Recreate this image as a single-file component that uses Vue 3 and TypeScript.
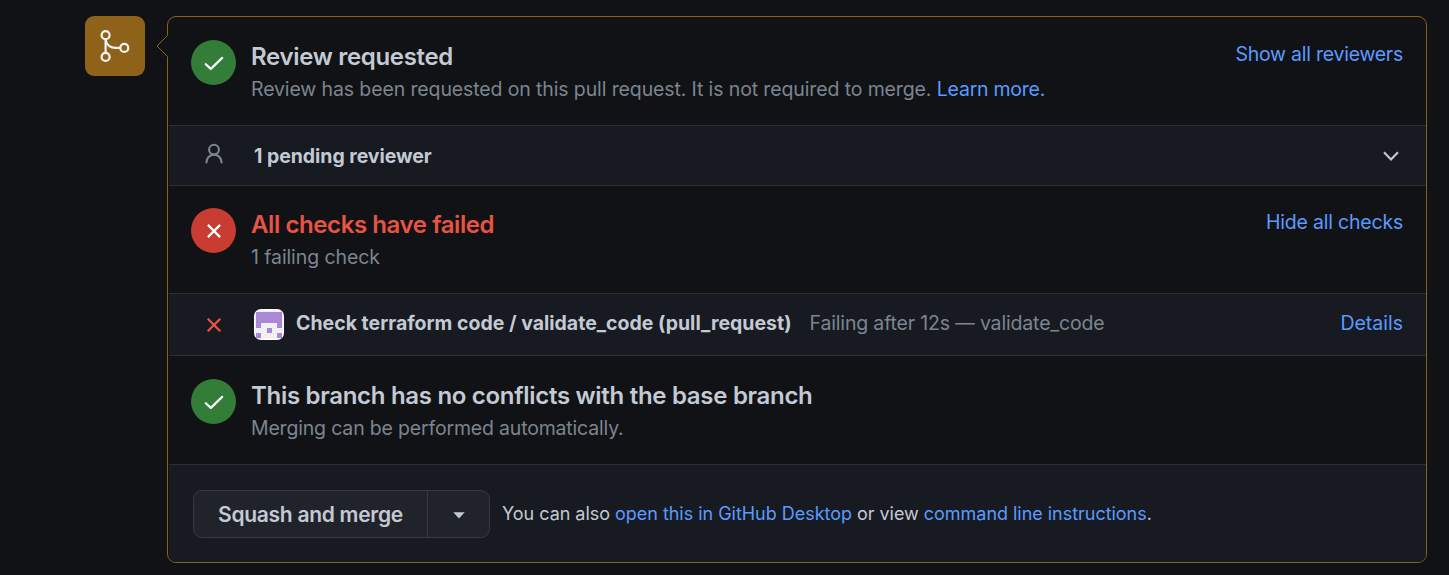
<script setup lang="ts">
interface Cell { x: number; y: number }

const avatarCells: Cell[] = []
const avatarRows: string[] = ['11111', '11111', '10001', '00100', '10001']
avatarRows.forEach((row, y) => {
  row.split('').forEach((v, x) => {
    if (v === '1') avatarCells.push({ x, y })
  })
})
</script>

<template>
  <main class="page">
    <div class="badge">
      <svg width="60" height="60" viewBox="0 0 60 60" fill="none" stroke="#f4f4f6" stroke-width="2.2">
        <circle cx="20.6" cy="19.2" r="4" />
        <circle cx="20.6" cy="40.9" r="4" />
        <circle cx="39.3" cy="31.9" r="4" />
        <path d="M20.6 23.2V36.9M20.6 23.4C21.4 28.6 25.2 31.9 30.6 31.9H35.3" />
      </svg>
    </div>
    <section class="box">
      <svg class="notch" width="12" height="24" viewBox="0 0 12 24">
        <path d="M12 1L1 12L12 23Z" fill="#111215" />
        <path d="M11.5 1.5L1 12L11.5 22.5" fill="none" stroke="#8b6118" stroke-width="1" />
      </svg>

      <div class="section">
        <span class="disc green">
          <svg width="45" height="45" viewBox="0 0 45 45"><path d="M14.8 24.2L19.8 28.9L31.2 17.9" /></svg>
        </span>
        <div class="copy">
          <h3 class="t1">Review requested</h3>
          <p><span class="t2">Review has been requested on this pull request. It is not required to merge.</span> <a class="t3">Learn more.</a></p>
        </div>
        <a class="action a1">Show all reviewers</a>
      </div>

      <div class="row reviewer">
        <svg class="lead" width="45" height="40" viewBox="0 0 45 40" fill="none" stroke="#7c8590" stroke-width="2.1">
          <circle cx="23" cy="13.6" r="4.9" />
          <path d="M15.3 27.2C15.3 22.2 18.7 18.6 23 18.6S30.7 22.2 30.7 27.2" />
        </svg>
        <strong class="t4">1 pending reviewer</strong>
        <svg class="chevron" width="18" height="12" viewBox="0 0 18 12" fill="none" stroke="#c3cad4" stroke-width="2.2">
          <path d="M2 2.3L9 9.5L16 2.3" />
        </svg>
      </div>

      <div class="section failing">
        <span class="disc red">
          <svg width="45" height="45" viewBox="0 0 45 45"><path d="M16.9 16.9L29.1 29.1M29.1 16.9L16.9 29.1" /></svg>
        </span>
        <div class="copy">
          <h3 class="t5 failed">All checks have failed</h3>
          <p class="t6">1 failing check</p>
        </div>
        <a class="action a2">Hide all checks</a>
      </div>

      <div class="row check">
        <svg class="lead" width="45" height="40" viewBox="0 0 45 40" fill="none" stroke="#e85443" stroke-width="2.3">
          <path d="M16.7 14.7L29.3 27.3M29.3 14.7L16.7 27.3" />
        </svg>
        <svg class="avatar" width="30" height="31" viewBox="0 0 30 31">
          <rect width="30" height="31" rx="7" fill="#fff" />
          <rect x="1" y="1.5" width="28" height="28" rx="5" fill="#f0f0f0" />
          <rect v-for="c in avatarCells" :key="`${c.x}-${c.y}`" :x="2.3 + c.x * 5.1" :y="3.3 + c.y * 5.1" width="5.15" height="5.15" fill="#ab87d8" shape-rendering="crispEdges" />
        </svg>
        <strong class="t7">Check terraform code / validate_code (pull_request)</strong>
        <span class="status t8">Failing after 12s — validate_code</span>
        <a class="action a3">Details</a>
      </div>

      <div class="section">
        <span class="disc green">
          <svg width="45" height="45" viewBox="0 0 45 45"><path d="M14.8 24.2L19.8 28.9L31.2 17.9" /></svg>
        </span>
        <div class="copy">
          <h3 class="t9">This branch has no conflicts with the base branch</h3>
          <p class="t10">Merging can be performed automatically.</p>
        </div>
      </div>

      <div class="footer">
        <div class="buttons">
          <button class="merge" type="button"><span class="t11">Squash and merge</span></button>
          <button class="more" type="button" aria-label="Select merge method">
            <svg width="12" height="7" viewBox="0 0 12 7"><path d="M0.3 0.3H11.7L6 6.5Z" fill="#c3cad4" /></svg>
          </button>
        </div>
        <p class="hint t12">You can also <a>open this in GitHub Desktop</a> or view <a>command line instructions</a>.</p>
      </div>
    </section>
  </main>
</template>

<style>
html, body { margin: 0; background: #111215; }
</style>

<style scoped>
* { box-sizing: border-box; }
.page {
  display: flex;
  align-items: flex-start;
  gap: 22px;
  width: 1449px;
  height: 575px;
  padding: 16px 22px 0 85px;
  background: #111215;
  color: #c3cad4;
  font-family: Inter, "Liberation Sans", sans-serif;
  font-size: 19.5px;
  white-space: nowrap;
  overflow: hidden;
}
.badge { flex: none; width: 60px; height: 60px; border-radius: 9px; background: #8e6219; }
.badge svg, .disc svg { display: block; }
.box {
  position: relative;
  width: 1260px;
  height: 547px;
  padding-left: 1px;
  border: 1px solid #8b6118;
  border-radius: 9px;
}
.notch { position: absolute; left: -12px; top: 17px; }
.section {
  display: flex;
  height: 109px;
  padding: 23px 23px 0 22px;
  border-bottom: 1px solid #2c2e33;
}
.section.failing { height: 108px; padding-top: 22px; }
.disc { flex: none; width: 45px; height: 45px; border-radius: 50%; }
.disc path { fill: none; stroke: #fff; stroke-width: 2.2; stroke-linecap: round; stroke-linejoin: round; }
.green { background: #347d39; }
.red { background: #c93c31; }
.red path { stroke-linecap: butt; }
.copy { flex: 1; margin-left: 15px; }
h3 { margin: 0; font-size: 24px; font-weight: 640; line-height: 33px; }
.failed { color: #e85443; }
p { margin: 0; line-height: 32px; color: #7c8590; }
a { color: #5a9bff; }
.action { line-height: 29px; }
.row { display: flex; align-items: center; padding: 0 23px 0 22px; background: #171a21; border-bottom: 1px solid #2c2e33; }
.lead { flex: none; }
.reviewer { height: 60px; }
.reviewer strong { margin-left: 18px; }
.chevron { margin-left: auto; margin-right: 3px; }
.check { height: 62px; }
.check .lead { margin-top: -2px; }
.check strong { margin: -4px 0 0 12px; }
.check .action { margin: -3px 0 0 auto; }
.avatar { flex: none; margin: 0 0 0 18px; }
strong { font-weight: 650; }
.status { margin: -4px 0 0 18px; color: #7c8590; }
.footer { display: flex; height: 97px; padding: 25px 25px 0 24px; background: #171a21; border-radius: 0 0 8px 8px; }
.buttons { display: flex; width: 297px; height: 48px; border: 1px solid #36393f; border-radius: 9px; background: #21232a; overflow: hidden; }
button { margin: 0; padding: 0; border: 0; background: none; color: inherit; font: 600 21px/48px Inter, "Liberation Sans", sans-serif; }
.merge { width: 234px; border-right: 1px solid #36393f; }
.more { flex: 1; display: flex; align-items: center; justify-content: center; padding-top: 3px; }
.hint { margin-left: 12px; line-height: 48px; font-size: 18px; color: #c3cad4; }
.t1 { letter-spacing: -0.32px; }
.t2 { letter-spacing: -0.12px; }
.t3 { letter-spacing: -0.25px; }
.t4 { letter-spacing: -0.05px; }
.t5 { letter-spacing: -0.41px; }
.t6 { letter-spacing: -0.1px; }
.t8 { letter-spacing: -0.16px; }
.t9 { letter-spacing: -0.3px; }
.t10 { letter-spacing: -0.18px; }
.t11 { letter-spacing: -0.28px; }
.t12 { letter-spacing: -0.03px; }
.a1 { letter-spacing: -0.25px; }
.a2 { letter-spacing: -0.2px; }
</style>
